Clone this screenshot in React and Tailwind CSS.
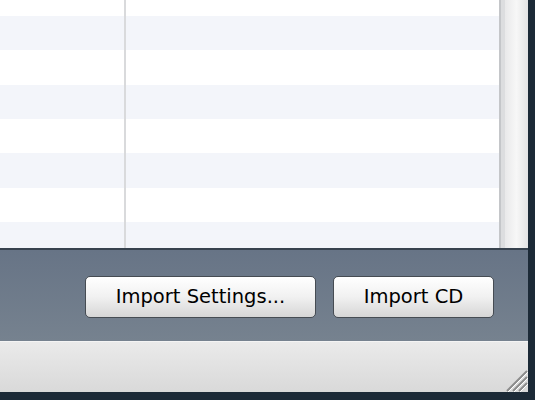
import React from "react";

const rows = [16, 34, 35, 34, 34, 35, 34, 26];

function Grip() {
  return (
    <svg width="26" height="26" viewBox="0 0 26 26" className="absolute right-0 bottom-0">
      <path d="M25 5 L5 25 M25 11 L11 25 M25 17 L17 25" stroke="#8c8c8c" strokeWidth="2" />
      <path d="M26 6 L6 26 M26 12 L12 26 M26 18 L18 26" stroke="#ffffff" strokeWidth="1" />
    </svg>
  );
}

function Button({ children, width }) {
  return (
    <button
      className={`h-[42px] ${width} rounded-[5px] border border-[#464c53] bg-gradient-to-b from-white via-[#f1f1f1] to-[#d6d6d6] text-[19.5px] text-black shadow-[inset_0_1px_0_#fff]`}
      style={{ fontFamily: '"DejaVu Sans", Verdana, sans-serif' }}
    >
      {children}
    </button>
  );
}

export default function App() {
  return (
    <div className="w-[535px] h-[400px] bg-[#1c2a37] flex overflow-hidden">
      <div className="w-[528px] h-[392px] flex flex-col">
        {/* list + scrollbar */}
        <div className="h-[248px] flex">
          <div className="w-[499px] flex flex-col bg-white">
            {rows.map((h, i) => (
              <div
                key={i}
                className={`flex ${i % 2 === 1 ? "bg-[#f3f5fa]" : "bg-white"}`}
                style={{ height: h }}
              >
                <div className="w-[126px] border-r-2 border-[#d9dadc]" />
                <div className="flex-1" />
              </div>
            ))}
          </div>
          <div className="w-[29px] flex">
            <div className="w-[2px] bg-[#c4c6c9]" />
            <div className="w-[4px] bg-[#dcdddf]" />
            <div className="flex-1 bg-gradient-to-r from-[#e9e9ea] via-[#f7f7f7] to-[#e3e3e4]" />
          </div>
        </div>
        <div className="h-[2px] bg-[#37424e]" />
        {/* toolbar */}
        <div className="h-[91px] bg-gradient-to-b from-[#677486] to-[#76828f] flex items-center justify-end gap-[17px] pr-[34px] pt-[3px]">
          <Button width="w-[231px]">Import Settings...</Button>
          <Button width="w-[161px]">Import CD</Button>
        </div>
        <div className="h-[1px] bg-[#f4f4f4]" />
        {/* status bar */}
        <div className="relative flex-1 bg-gradient-to-b from-[#eaeaea] to-[#d9d9d9]">
          <Grip />
        </div>
      </div>
      <div className="flex-1" />
    </div>
  );
}
